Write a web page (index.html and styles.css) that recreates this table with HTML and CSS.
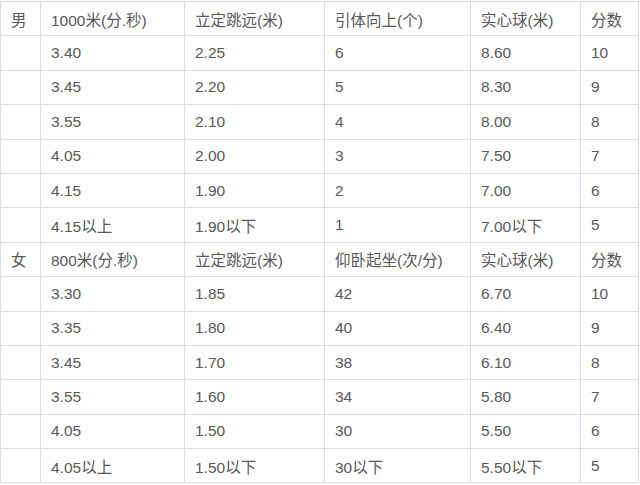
FILE: index.html
```html
<!DOCTYPE html>
<html lang="zh">
<head>
<meta charset="utf-8">
<link rel="stylesheet" href="styles.css">
</head>
<body>
<table class="score">
<colgroup>
<col class="c1"><col class="c2"><col class="c3"><col class="c4"><col class="c5"><col class="c6">
</colgroup>
<tbody>
<tr><td>男</td><td>1000米(分.秒)</td><td>立定跳远(米)</td><td>引体向上(个)</td><td>实心球(米)</td><td>分数</td></tr>
<tr><td></td><td>3.40</td><td>2.25</td><td>6</td><td>8.60</td><td>10</td></tr>
<tr><td></td><td>3.45</td><td>2.20</td><td>5</td><td>8.30</td><td>9</td></tr>
<tr><td></td><td>3.55</td><td>2.10</td><td>4</td><td>8.00</td><td>8</td></tr>
<tr><td></td><td>4.05</td><td>2.00</td><td>3</td><td>7.50</td><td>7</td></tr>
<tr><td></td><td>4.15</td><td>1.90</td><td>2</td><td>7.00</td><td>6</td></tr>
<tr><td></td><td>4.15以上</td><td>1.90以下</td><td>1</td><td>7.00以下</td><td>5</td></tr>
<tr><td>女</td><td>800米(分.秒)</td><td>立定跳远(米)</td><td>仰卧起坐(次/分)</td><td>实心球(米)</td><td>分数</td></tr>
<tr><td></td><td>3.30</td><td>1.85</td><td>42</td><td>6.70</td><td>10</td></tr>
<tr><td></td><td>3.35</td><td>1.80</td><td>40</td><td>6.40</td><td>9</td></tr>
<tr><td></td><td>3.45</td><td>1.70</td><td>38</td><td>6.10</td><td>8</td></tr>
<tr><td></td><td>3.55</td><td>1.60</td><td>34</td><td>5.80</td><td>7</td></tr>
<tr><td></td><td>4.05</td><td>1.50</td><td>30</td><td>5.50</td><td>6</td></tr>
<tr><td></td><td>4.05以上</td><td>1.50以下</td><td>30以下</td><td>5.50以下</td><td>5</td></tr>
</tbody>
</table>
</body>
</html>
```
FILE: styles.css
```css
html, body {
  margin: 0;
  padding: 0;
  background: #ffffff;
}
body {
  padding-top: 1px;
}
.score {
  border-collapse: collapse;
  table-layout: fixed;
  width: 638px;
  font-family: "Liberation Sans", Arial, "Noto Sans CJK SC", sans-serif;
  font-size: 15.5px;
  color: #595959;
}
.c1 { width: 40px; }
.c2 { width: 144px; }
.c3 { width: 140px; }
.c4 { width: 146px; }
.c5 { width: 110px; }
.c6 { width: 58px; }
.score td {
  border: 1px solid #dddddd;
  height: 33.4px;
  padding: 0 9px 0 10px;
  vertical-align: middle;
  white-space: nowrap;
  box-sizing: border-box;
}
.score tr {
  height: 34.4px;
}
```
